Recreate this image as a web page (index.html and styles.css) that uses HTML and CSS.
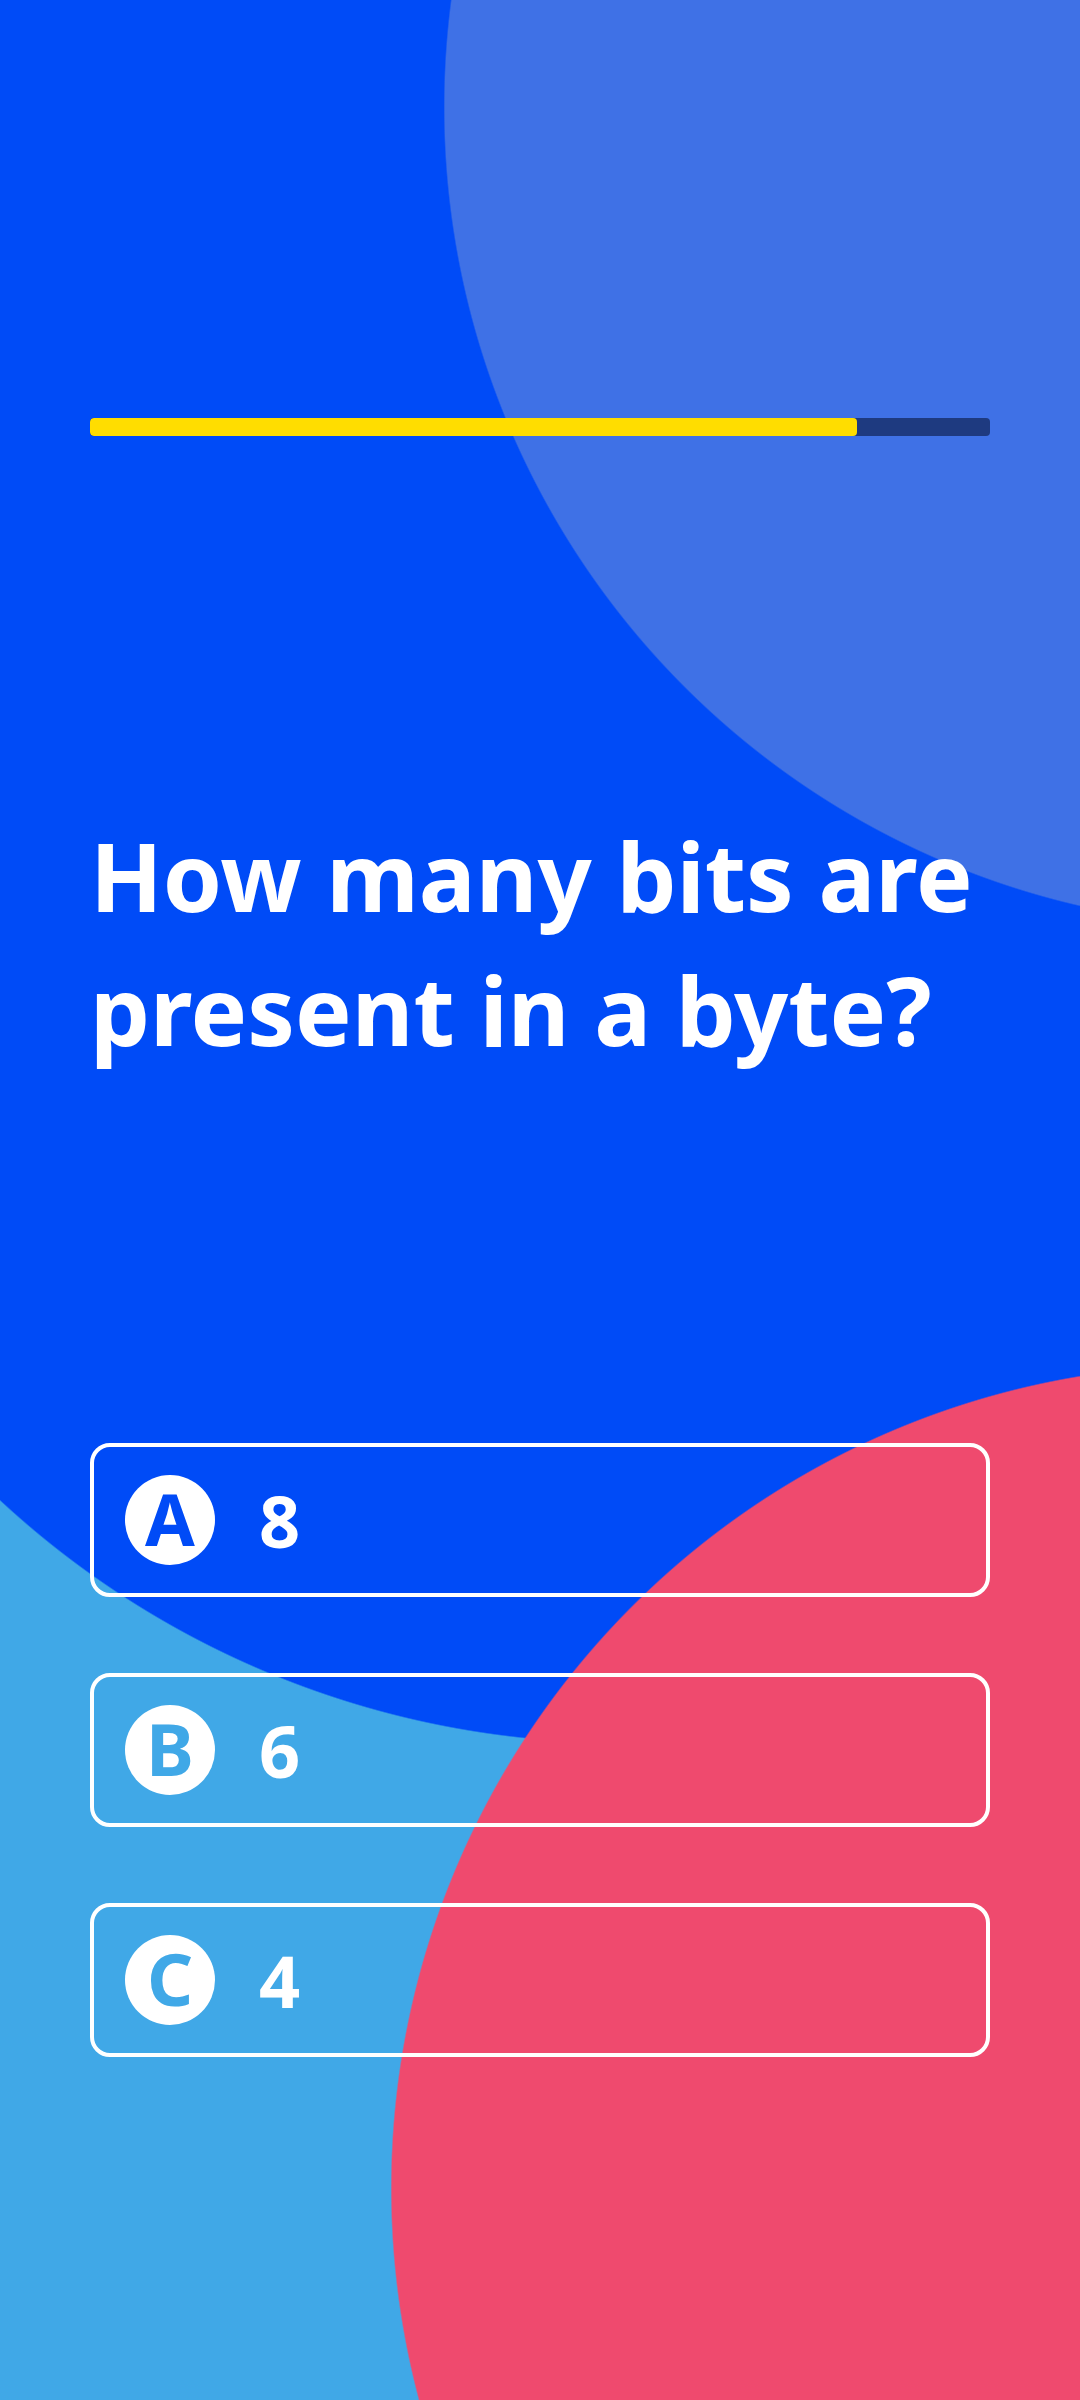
FILE: index.html
```html
<!DOCTYPE html>
<html lang="en">
<head>
<meta charset="utf-8">
<title>Quiz</title>
<link rel="stylesheet" href="styles.css">
</head>
<body>
<main class="screen">
  <div class="progress"><div class="progress-fill" style="width: 85.2%"></div></div>
  <h1 class="question">How many bits are present in a byte?</h1>
  <ul class="options">
    <li class="option"><span class="badge badge-a">A</span><span class="answer">8</span></li>
    <li class="option"><span class="badge badge-b">B</span><span class="answer">6</span></li>
    <li class="option"><span class="badge badge-c">C</span><span class="answer">4</span></li>
  </ul>
</main>
</body>
</html>
```
FILE: styles.css
```css
* { box-sizing: border-box; }
html, body { margin: 0; padding: 0; }
body {
  width: 1080px;
  height: 2400px;
  overflow: hidden;
  font-family: "Noto Sans", "Open Sans", sans-serif;
}
.screen {
  width: 1080px;
  height: 2400px;
  padding: 418px 90px 0;
  display: flex;
  flex-direction: column;
  background-color: #004bf7;
  background-image:
    radial-gradient(circle at 1214px 2188px, #ef4a6e 822px, rgba(239,74,110,0) 823.5px),
    radial-gradient(circle at 1264px 107px, #3f71e6 819px, rgba(63,113,230,0) 820.5px),
    radial-gradient(circle at 618px -166px, rgba(64,168,231,0) 908px, #40a8e7 909.5px);
  background-repeat: no-repeat;
  background-size: 1080px 2400px, 1080px 2400px, 1080px 1400px;
  background-position: 0 0, 0 0, 0 1000px;
}
.progress {
  height: 18px;
  border-radius: 4px;
  background: #1e3a80;
  overflow: hidden;
}
.progress-fill {
  height: 100%;
  background: #ffdd00;
  border-radius: 4px;
}
.question {
  margin: 372px 0 0;
  color: #fff;
  font-size: 95px;
  line-height: 134px;
  font-weight: 700;
}
.options {
  list-style: none;
  margin: 367px 0 0;
  padding: 0;
  display: flex;
  flex-direction: column;
  gap: 76px;
}
.option {
  height: 154px;
  border: 4px solid #fff;
  border-radius: 20px;
  display: flex;
  align-items: center;
  padding-left: 31px;
  gap: 44px;
}
.badge {
  width: 90px;
  height: 90px;
  border-radius: 50%;
  background: #fff;
  display: flex;
  align-items: center;
  justify-content: center;
  padding-bottom: 4px;
  font-size: 72px;
  font-weight: 700;
  line-height: 1;
}
.badge-a { color: #004bf7; }
.badge-b, .badge-c { color: #40a8e7; }
.answer {
  color: #fff;
  font-size: 72px;
  font-weight: 700;
  line-height: 1;
}
```
